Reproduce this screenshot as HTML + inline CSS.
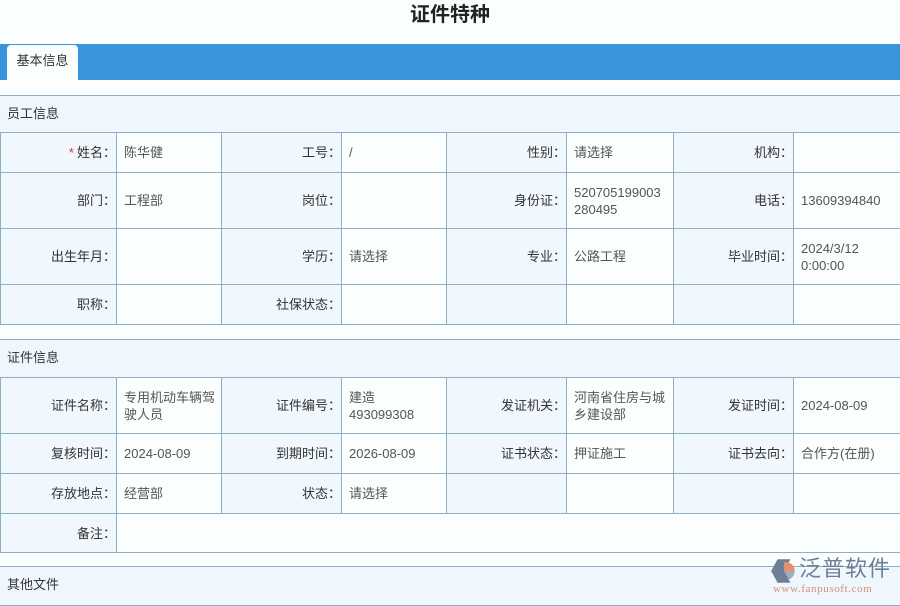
<!DOCTYPE html>
<html><head><meta charset="utf-8"><style>
*{margin:0;padding:0;box-sizing:border-box}
body{width:900px;height:600px;overflow:hidden;background:#fbfeff;font-family:"Liberation Sans","Noto Sans CJK SC",sans-serif;font-size:13px;color:#333;position:relative}
.title{position:absolute;top:1px;left:0;width:900px;height:43px;text-align:center;font-size:20px;font-weight:bold;line-height:28px;color:#222}
.bar{position:absolute;top:44px;left:0;width:900px;height:36px;background:#3a94db}
.tab{position:absolute;top:45px;left:7px;width:71px;height:35px;background:#fbfeff;border-radius:4px 4px 0 0;text-align:center;line-height:32px;color:#333}
.sh{position:absolute;left:0;width:900px;background:#eff6fe;border-top:1px solid #8fb0c4;border-bottom:1px solid #8fb0c4;padding-left:7px;color:#333}
table{position:absolute;left:0;width:901px;border-collapse:collapse;table-layout:fixed}
td{border:1px solid #8fb0c4;vertical-align:middle;line-height:17px}
td.l{background:#f0f7fd;text-align:right;padding-right:0px;color:#333}
td.v{background:#fbfeff;color:#555;padding-left:7px;padding-right:4px}
.r{color:#d33;margin-right:3px}
</style></head><body>
<div class="title">证件特种</div>
<div class="bar"></div>
<div class="tab">基本信息</div>

<div class="sh" style="top:95px;height:38px;line-height:35px">员工信息</div>
<table style="top:132px">
<colgroup><col style="width:116px"><col style="width:105px"><col style="width:120px"><col style="width:105px"><col style="width:120px"><col style="width:107px"><col style="width:120px"><col style="width:108px"></colgroup>
<tr style="height:40px"><td class="l"><span class="r">*</span>姓名：</td><td class="v">陈华健</td><td class="l">工号：</td><td class="v">/</td><td class="l">性别：</td><td class="v">请选择</td><td class="l">机构：</td><td class="v"></td></tr>
<tr style="height:56px"><td class="l">部门：</td><td class="v">工程部</td><td class="l">岗位：</td><td class="v"></td><td class="l">身份证：</td><td class="v">520705199003<br>280495</td><td class="l">电话：</td><td class="v">13609394840</td></tr>
<tr style="height:56px"><td class="l">出生年月：</td><td class="v"></td><td class="l">学历：</td><td class="v">请选择</td><td class="l">专业：</td><td class="v">公路工程</td><td class="l">毕业时间：</td><td class="v">2024/3/12<br>0:00:00</td></tr>
<tr style="height:40px"><td class="l">职称：</td><td class="v"></td><td class="l">社保状态：</td><td class="v"></td><td class="l"></td><td class="v"></td><td class="l"></td><td class="v"></td></tr>
</table>

<div class="sh" style="top:339px;height:39px;line-height:35px">证件信息</div>
<table style="top:377px">
<colgroup><col style="width:116px"><col style="width:105px"><col style="width:120px"><col style="width:105px"><col style="width:120px"><col style="width:107px"><col style="width:120px"><col style="width:108px"></colgroup>
<tr style="height:56px"><td class="l">证件名称：</td><td class="v">专用机动车辆驾<br>驶人员</td><td class="l">证件编号：</td><td class="v">建造<br>493099308</td><td class="l">发证机关：</td><td class="v">河南省住房与城<br>乡建设部</td><td class="l">发证时间：</td><td class="v">2024-08-09</td></tr>
<tr style="height:40px"><td class="l">复核时间：</td><td class="v">2024-08-09</td><td class="l">到期时间：</td><td class="v">2026-08-09</td><td class="l">证书状态：</td><td class="v">押证施工</td><td class="l">证书去向：</td><td class="v">合作方(在册)</td></tr>
<tr style="height:40px"><td class="l">存放地点：</td><td class="v">经营部</td><td class="l">状态：</td><td class="v">请选择</td><td class="l"></td><td class="v"></td><td class="l"></td><td class="v"></td></tr>
<tr style="height:39px"><td class="l">备注：</td><td class="v" colspan="7"></td></tr>
</table>

<div class="sh" style="top:566px;height:40px;line-height:35px">其他文件</div>

<div style="position:absolute;left:769px;top:554px;width:131px;height:46px">
<svg width="30" height="28" style="position:absolute;left:0;top:3px" viewBox="0 0 28 26"><path d="M8 2 L20 2 L14 13 L20 24 L8 24 L2 13Z" fill="#6d7f95"/><path d="M14 5 A8 8 0 0 1 24 13 L14 13Z" fill="#e8906a"/><path d="M14 13 L24 13 A8 8 0 0 1 14 21Z" fill="#6d7f95" opacity=".6"/></svg>
<div style="position:absolute;left:30px;top:0;font-size:22px;color:#6d7f95;letter-spacing:1px;line-height:30px">泛普软件</div>
<div style="position:absolute;left:4px;top:29px;font-size:11px;color:#d9906f;font-family:'Liberation Serif',serif;letter-spacing:.6px">www.fanpusoft.com</div>
</div>
</body></html>
